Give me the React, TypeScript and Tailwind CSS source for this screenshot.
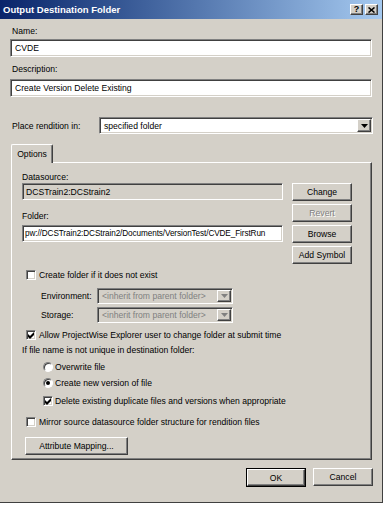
import React from "react";

const sunken =
  "border border-t-[#808080] border-l-[#808080] border-b-white border-r-white shadow-[inset_1px_1px_0_#404040,inset_-1px_-1px_0_#d4d0c8]";
const raised =
  "border border-t-white border-l-white border-b-[#404040] border-r-[#404040] shadow-[inset_-1px_-1px_0_#808080,inset_1px_1px_0_#d4d0c8]";

function Check({ checked }: { checked?: boolean }) {
  return (
    <div className={`w-[10px] h-[10px] shrink-0 bg-white ${sunken} flex items-center justify-center`}>
      {checked && (
        <svg width="7" height="7" viewBox="0 0 7 7">
          <path d="M0 2 L2 4 L6 0 L6 3 L2 7 L0 5 Z" fill="black" />
        </svg>
      )}
    </div>
  );
}

function Radio({ checked }: { checked?: boolean }) {
  return (
    <div className="w-[10px] h-[10px] shrink-0 rounded-full bg-white border border-t-[#808080] border-l-[#808080] border-b-white border-r-white shadow-[inset_1px_1px_0_#404040] flex items-center justify-center">
      {checked && <div className="w-[4px] h-[4px] rounded-full bg-black" />}
    </div>
  );
}

function Arrow({ disabled }: { disabled?: boolean }) {
  return (
    <div className={`w-[14px] h-full shrink-0 bg-[#d4d0c8] ${raised} flex items-center justify-center`}>
      <svg width="7" height="4" viewBox="0 0 7 4">
        <path d="M0 0H7L3.5 4Z" fill={disabled ? "#808080" : "black"} />
      </svg>
    </div>
  );
}

function Btn({
  children,
  w,
  disabled,
  def,
}: {
  children: React.ReactNode;
  w: string;
  disabled?: boolean;
  def?: boolean;
}) {
  const inner = (
    <div
      className={`w-full h-full bg-[#d4d0c8] ${raised} flex items-center justify-center ${
        disabled ? "text-[#808080] [text-shadow:1px_1px_0_#ffffff]" : "text-black"
      }`}
    >
      {children}
    </div>
  );
  if (def) {
    return <div className={`${w} h-[19px] border border-black`}>{inner}</div>;
  }
  return <div className={`${w} h-[18px]`}>{inner}</div>;
}

export default function App() {
  return (
    <div className="w-[386px] h-[505px] bg-white font-['Liberation_Sans',Arial,sans-serif] text-[8.6px] text-black leading-[12px]">
      <div className="w-[383px] h-[503px] bg-[#d4d0c8] border-r border-b border-r-[#404040] border-b-[#404040] flex flex-col">
        {/* Title bar */}
        <div className="h-[19px] shrink-0 flex items-center pl-[3px] pr-[4px] bg-linear-to-r from-[#0a246a] to-[#a6caf0]">
          <span className="flex-1 text-white font-bold text-[9.5px]">Output Destination Folder</span>
          <div className="flex gap-[2px]">
            <div className={`w-[13px] h-[11px] bg-[#d4d0c8] ${raised} flex items-center justify-center font-bold text-[9px] leading-[9px]`}>
              ?
            </div>
            <div className={`w-[13px] h-[11px] bg-[#d4d0c8] ${raised} flex items-center justify-center`}>
              <svg width="7" height="6" viewBox="0 0 7 6">
                <path d="M0.5 0.5 L6.5 5.5 M6.5 0.5 L0.5 5.5" stroke="black" strokeWidth="1.6" />
              </svg>
            </div>
          </div>
        </div>

        {/* Body */}
        <div className="flex flex-col pl-[10px]">
          <div className="mt-[6px] ml-[2px] h-[12px]">Name:</div>
          <div className={`mt-[2px] w-[362px] h-[18px] bg-white ${sunken} flex items-center pl-[4px]`}>CVDE</div>
          <div className="mt-[6px] ml-[2px] h-[12px]">Description:</div>
          <div className={`mt-[4px] w-[362px] h-[18px] bg-white ${sunken} flex items-center pl-[4px]`}>
            Create Version Delete Existing
          </div>

          <div className="mt-[20px] flex items-center h-[17px]">
            <span className="ml-[2px] w-[87px]">Place rendition in:</span>
            <div className={`w-[274px] h-[17px] bg-white ${sunken} p-[1px] flex items-center`}>
              <span className="flex-1 pl-[3px]">specified folder</span>
              <Arrow />
            </div>
          </div>

          {/* Tab */}
          <div className="mt-[10px] ml-[1px] relative z-10 w-[42px] h-[19px] -mb-[1px] bg-[#d4d0c8] border-t border-l border-r border-t-white border-l-white border-r-[#404040] rounded-t-[2px] shadow-[inset_-1px_0_0_#808080] flex items-center justify-center">
            Options
          </div>

          {/* Panel */}
          <div className="ml-[1px] w-[361px] h-[298px] border border-t-white border-l-white border-r-[#404040] border-b-[#404040] shadow-[inset_-1px_-1px_0_#808080] pl-[10px] pt-[9px] flex flex-col">
            <div className="flex gap-[9px]">
              <div className="flex flex-col w-[261px]">
                <div className="h-[11px] leading-[11px]">Datasource:</div>
                <div className={`h-[17px] bg-[#d4d0c8] ${sunken} flex items-center pl-[3px]`}>DCSTrain2:DCStrain2</div>
                <div className="mt-[10px] h-[12px]">Folder:</div>
                <div className={`mt-[3px] h-[17px] bg-white ${sunken} flex items-center pl-[2px] overflow-hidden whitespace-nowrap text-[8.2px] tracking-[-0.1px]`}>
                  pw://DCSTrain2:DCStrain2/Documents/VersionTest/CVDE_FirstRun
                </div>
              </div>
              <div className="flex flex-col w-[60px] pt-[11px] gap-[3px]">
                <Btn w="w-[60px]">Change</Btn>
                <Btn w="w-[60px]" disabled>
                  Revert
                </Btn>
                <Btn w="w-[60px]">Browse</Btn>
                <Btn w="w-[60px]">Add Symbol</Btn>
              </div>
            </div>

            <div className="mt-[5px] ml-[4px] h-[12px] flex items-center gap-[3px]">
              <Check />
              <span>Create folder if it does not exist</span>
            </div>

            <div className="mt-[7px] h-[16px] flex items-center">
              <span className="ml-[19px] w-[56px]">Environment:</span>
              <div className={`w-[136px] h-[16px] bg-[#d4d0c8] ${sunken} p-[1px] flex items-center`}>
                <span className="flex-1 pl-[3px] text-[#808080]">&lt;inherit from parent folder&gt;</span>
                <Arrow disabled />
              </div>
            </div>
            <div className="mt-[3px] h-[16px] flex items-center">
              <span className="ml-[19px] w-[56px]">Storage:</span>
              <div className={`w-[136px] h-[16px] bg-[#d4d0c8] ${sunken} p-[1px] flex items-center`}>
                <span className="flex-1 pl-[3px] text-[#808080]">&lt;inherit from parent folder&gt;</span>
                <Arrow disabled />
              </div>
            </div>

            <div className="mt-[6px] ml-[4px] h-[12px] flex items-center gap-[3px]">
              <Check checked />
              <span>Allow ProjectWise Explorer user to change folder at submit time</span>
            </div>

            <div className="mt-[3px] h-[12px]">If file name is not unique in destination folder:</div>

            <div className="mt-[5px] ml-[21px] h-[12px] flex items-center gap-[2px]">
              <Radio />
              <span>Overwrite file</span>
            </div>
            <div className="mt-[4px] ml-[21px] h-[12px] flex items-center gap-[2px]">
              <Radio checked />
              <span>Create new version of file</span>
            </div>
            <div className="mt-[6px] ml-[21px] h-[12px] flex items-center gap-[2px]">
              <Check checked />
              <span>Delete existing duplicate files and versions when appropriate</span>
            </div>

            <div className="mt-[9px] ml-[4px] h-[12px] flex items-center gap-[3px]">
              <Check />
              <span>Mirror source datasource folder structure for rendition files</span>
            </div>

            <div className="mt-[9px] ml-[3px]">
              <Btn w="w-[103px]">Attribute Mapping...</Btn>
            </div>
          </div>

          {/* Bottom buttons */}
          <div className="mt-[8px] flex justify-end gap-[7px] pr-[9px]">
            <Btn w="w-[60px]" def>
              OK
            </Btn>
            <Btn w="w-[60px]">Cancel</Btn>
          </div>
        </div>
      </div>
    </div>
  );
}
